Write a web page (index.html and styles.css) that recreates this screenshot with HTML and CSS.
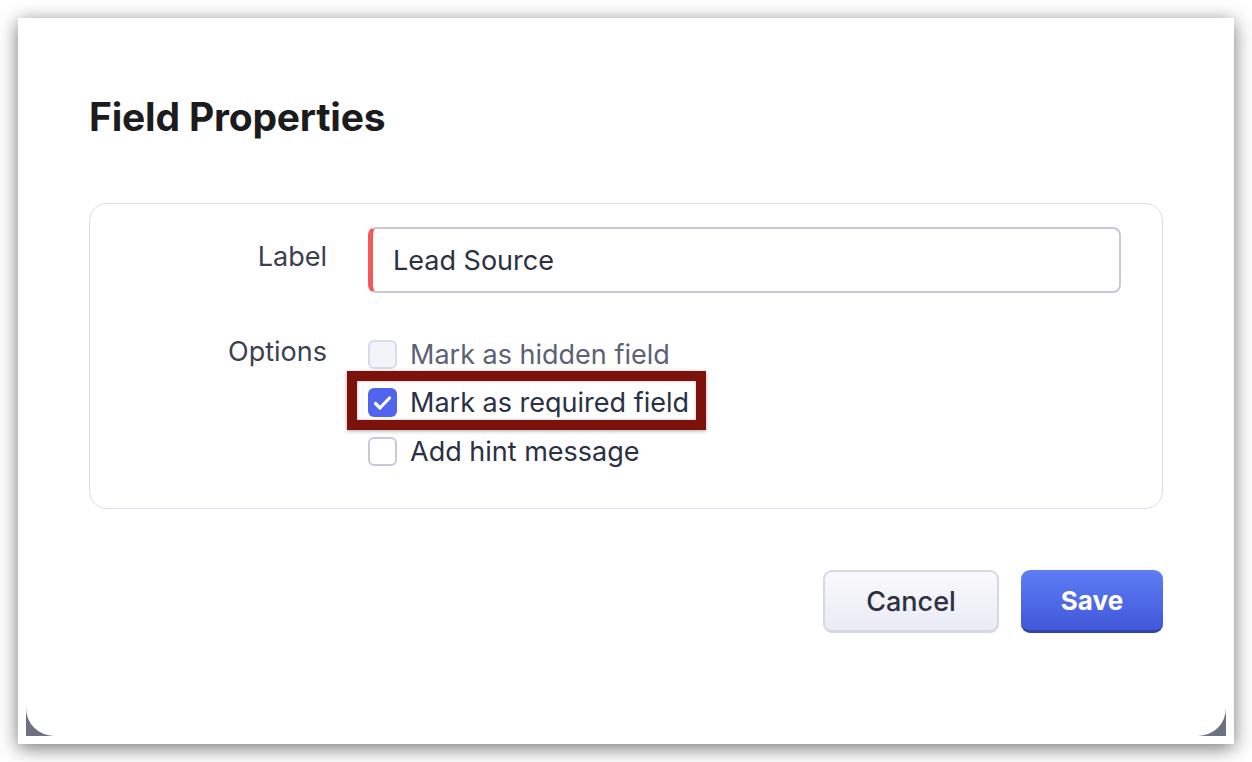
FILE: index.html
```html
<!DOCTYPE html>
<html>
<head>
<meta charset="utf-8">
<link rel="stylesheet" href="styles.css">
</head>
<body>
<div class="window">
  <div class="backdrop">
    <div class="dialog">
      <h1 class="title">Field Properties</h1>
      <div class="card">
        <div class="row">
          <div class="row-label label-top">Label</div>
          <div class="input"><span class="input-text">Lead Source</span></div>
        </div>
        <div class="row options-row">
          <div class="row-label">Options</div>
          <div class="options">
            <label class="opt disabled"><span class="box"></span><span class="opt-text">Mark as hidden field</span></label>
            <label class="opt highlight"><span class="box checked"><svg viewBox="0 0 29 29" width="29" height="29"><path d="M7.5 15.5l4.5 4.5 9.5-10" fill="none" stroke="#fff" stroke-width="3.2" stroke-linecap="round" stroke-linejoin="round"/></svg></span><span class="opt-text">Mark as required field</span></label>
            <label class="opt"><span class="box"></span><span class="opt-text">Add hint message</span></label>
          </div>
        </div>
      </div>
      <div class="actions">
        <button class="btn btn-cancel">Cancel</button>
        <button class="btn btn-save">Save</button>
      </div>
    </div>
  </div>
</div>
</body>
</html>
```

FILE: styles.css
```css
* { box-sizing: border-box; }
html, body { margin: 0; padding: 0; background: #ffffff; }
body { font-family: Inter, "Noto Sans", sans-serif; }

.window {
  margin: 18px;
  width: 1216px;
  height: 726px;
  background: #ffffff;
  padding: 0 8px 8px 8px;
  box-shadow: 0 4px 18px rgba(0, 0, 0, 0.55);
}
.backdrop {
  height: 100%;
  background: #6d7283;
}
.dialog {
  height: 100%;
  background: #ffffff;
  border-radius: 0 0 28px 28px;
  padding: 76px 63px 0 63px;
}
.title {
  margin: 0;
  font-size: 39px;
  line-height: 46px;
  font-weight: 700;
  color: #1c1c1e;
  letter-spacing: -0.2px;
}
.card {
  margin-top: 63px;
  height: 306px;
  border: 1.5px solid #d9dcec;
  border-radius: 18px;
  padding: 23px 41px 0 0;
}
.row {
  display: grid;
  grid-template-columns: 237px 1fr;
  column-gap: 41px;
}
.row-label {
  text-align: right;
  font-size: 27px;
  line-height: 32px;
  color: #3b4050;
}
.label-top { padding-top: 14px; }
.input {
  height: 66px;
  border: 2px solid #c9c8d8;
  border-left: 5px solid #f25a5a;
  border-radius: 8px;
  display: flex;
  align-items: center;
  padding-left: 20px;
}
.input-text {
  font-size: 27px;
  color: #2a3144;
  padding-top: 1px;
}
.options-row { margin-top: 43px; }
.options {
  display: flex;
  flex-direction: column;
  align-items: flex-start;
  gap: 12.5px;
}
.opt {
  position: relative;
  display: inline-flex;
  align-items: center;
  gap: 13px;
  height: 36px;
}
.box {
  width: 29px;
  height: 29px;
  border: 2.5px solid #c8c9db;
  border-radius: 6px;
  background: #fff;
  display: flex;
  align-items: center;
  justify-content: center;
}
.box svg { display: block; }
.box.checked {
  background: #5064f0;
  border: none;
}
.disabled .box {
  background: #f2f4f8;
  border-color: #d6dcf0;
}
.opt-text {
  font-size: 27px;
  color: #2a3144;
}
.disabled .opt-text { color: #5c6274; }
.highlight::before {
  content: "";
  position: absolute;
  top: -14px;
  bottom: -9px;
  left: -21px;
  right: -17px;
  border: 10px solid #7b120b;
  box-shadow: 0 1px 4px rgba(0, 0, 0, 0.35), inset 0 0 3px rgba(0, 0, 0, 0.3);
  pointer-events: none;
}
.actions {
  margin-top: 61px;
  display: flex;
  justify-content: flex-end;
  gap: 22px;
}
.btn {
  height: 63px;
  border-radius: 9px;
  font-family: Inter, "Noto Sans", sans-serif;
  font-size: 26px;
  cursor: pointer;
}
.btn-cancel {
  width: 176px;
  background: linear-gradient(#f9f9fd, #ebebf5);
  border: 2px solid #d5d8e4;
  border-bottom-width: 3px;
  color: #2b3142;
  font-weight: 500;
  font-size: 27px;
}
.btn-save {
  width: 142px;
  background: linear-gradient(#5e7df6, #4158d9);
  border: none;
  border-bottom: 3px solid #3245ad;
  color: #ffffff;
  font-weight: 700;
}
```
